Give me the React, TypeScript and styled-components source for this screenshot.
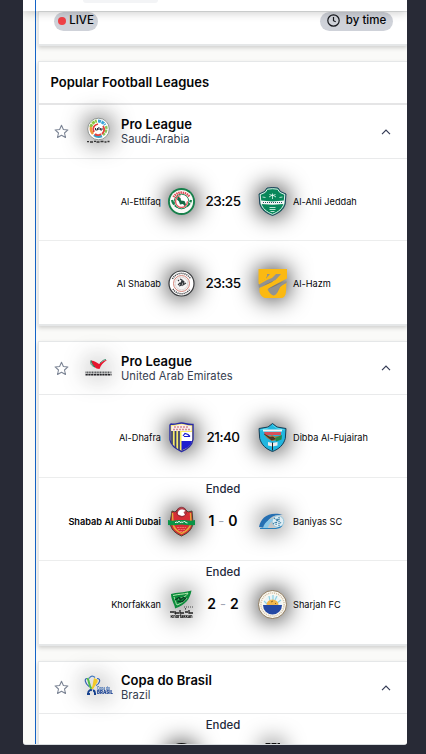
import React from "react";
import styled, { createGlobalStyle } from "styled-components";

const Global = createGlobalStyle`
  *, *::before, *::after { box-sizing: border-box; }
  body { margin: 0; background: #282a36; font-family: Inter, sans-serif; color: #050608; overflow: hidden; }
  svg { display: block; overflow: visible; }
`;
const Page = styled.div`
  height: 754px; padding: 0 19px 9px 23px; overflow: hidden; background: #282a36;
`;
const Phone = styled.main`
  height: 745px; overflow: hidden; background: #fafaf8;
  border-radius: 0 0 3px 3px; display: flex; flex-direction: column;
  border-bottom: 1px solid #d9dde0;
`;
const TopBar = styled.header`
  height: 11px; flex: none; background: #fff; padding-left: 12px; z-index: 2; position: relative;
  box-shadow: 0 2px 10px rgba(0, 0, 0, 0.2);
`;
const TopRail = styled.div`border-left: 1px solid #1464c8; height: 11px; padding-left: 47px;`;
const SearchEdge = styled.div`
  width: 75px; height: 3px; background: #f3f4f6; border-radius: 0 0 6px 6px;
`;
const Feed = styled.div`
  margin-left: 12px; border-left: 1px solid #1464c8; padding-left: 2px;
  flex: 1; min-height: 0; display: flex; flex-direction: column; gap: 15px;
`;
const Card = styled.section<{ $h: number }>`
  height: ${(p) => p.$h}px; flex: none; background: #fff;
  border: solid #e5e7e8; border-width: 1px 0 2px 1px;
  box-shadow: 0 2px 4px rgba(0, 0, 0, 0.17);
`;
const FilterBar = styled.div`
  display: flex; justify-content: space-between; padding: 0 14px 0 15px;
`;
const Pill = styled.button<{ $w: number; $gap: number }>`
  width: ${(p) => p.$w}px; height: 19px; border: 0; padding: 0 0 2px; border-radius: 10px;
  background: #cfd2d9; font: 500 11.5px/17px Inter, sans-serif; color: #050608;
  display: flex; align-items: center; justify-content: center; gap: ${(p) => p.$gap}px;
`;
const LiveDot = styled.i`width: 8px; height: 8px; border-radius: 50%; background: #ef4146;`;
const SectionTitle = styled.h1`
  margin: 0; height: 43px; padding-left: 11.5px; border-bottom: 2px solid #e5e5e6;
  font-size: 13px; line-height: 41px; font-weight: 600;
`;
const LeagueHead = styled.div<{ $h: number }>`
  height: ${(p) => p.$h}px; display: flex; align-items: center; padding: 0 16px 0 15px;
  border-bottom: 1px solid #e9eaeb;
`;
const LeagueLogo = styled.div`
  width: 29px; height: 29px; margin: 0 8px 0 15px;
  svg { filter: drop-shadow(0 0 12px rgba(0, 0, 0, 0.85)); }
`;
const LeagueText = styled.div<{ $lead: number }>`flex: 1; padding-top: ${(p) => p.$lead}px;`;
const LeagueName = styled.div`font-size: 13px; line-height: 15px; font-weight: 600;`;
const Country = styled.div`font-size: 11.2px; line-height: 14px; color: #374151;`;
const Match = styled.div<{ $h: number }>`
  height: ${(p) => p.$h}px; border-bottom: 1px solid #eceded;
  &:last-child { border-bottom: 0; }
`;
const Status = styled.div<{ $h: number }>`
  height: ${(p) => p.$h}px; text-align: center; font-size: 11.4px; line-height: 22px; font-weight: 500; color: #1e293b;
`;
const Teams = styled.div`
  height: 46px; display: grid; align-items: center;
  grid-template-columns: 122px 41px 42px 49px 1fr;
`;
const Team = styled.span<{ $home?: boolean; $winner?: boolean }>`
  font-size: 9.2px; white-space: nowrap; text-align: ${(p) => (p.$home ? "right" : "left")};
  font-weight: ${(p) => (p.$winner ? 600 : 400)};
`;
const Crest = styled.div<{ $away?: boolean }>`
  width: 29px; height: 29px; margin-left: ${(p) => (p.$away ? 14 : 6)}px;
  svg { filter: drop-shadow(0 0 12px #000); }
`;
const Score = styled.div`
  display: flex; justify-content: center; gap: 4px; white-space: nowrap;
  font-size: 14px; font-weight: 600; line-height: 18px;
`;
const Kickoff = styled(Score)`font-weight: 500; font-size: 13.5px; letter-spacing: -0.5px;`;
const Dash = styled.span`color: #a1a6b4; font-weight: 400; font-size: 13px;`;

const Svg = ({ children }: { children: React.ReactNode }) => (
  <svg width="29" height="29" viewBox="0 0 29 29" fill="none">{children}</svg>
);

const logos: Record<string, React.ReactNode> = {
  saudi: <Svg>
    <circle cx="14.5" cy="12" r="10.8" fill="#fff" stroke="#868b88" strokeWidth=".9" />
    <path d="M6.8 10a8 8 0 0 1 6-6" stroke="#8cc63e" strokeWidth="3" strokeDasharray="3 .6" />
    <path d="M14 4a8 8 0 0 1 7 4" stroke="#3ba5d7" strokeWidth="3" strokeDasharray="3 .6" />
    <path d="M22 9a8 8 0 0 1-3 9" stroke="#8cc65a" strokeWidth="2.5" strokeDasharray="3 .7" />
    <path d="M18 19a8 8 0 0 1-8-1" stroke="#3b9fc4" strokeWidth="2.5" />
    <path d="M9 17a8 8 0 0 1-2-7" stroke="#f1953c" strokeWidth="2.5" />
    <path d="M10 15c-2-4 0-7 4-8m5 2c2 3 1 6-1 8m-1 0c-2 2-5 1-6 0" stroke="#e6403a" strokeWidth="1.8" />
    <circle cx="14.5" cy="12" r="3.8" fill="#fff" />
    <path d="M11.5 11v2h2v-2m1.4 2v-3m1.5 1v2h1.6v-2" stroke="#26303a" strokeWidth="1" />
    <path d="M3 24.600h2m1 .4h3m1-.6h2m.5.6h3m1-.5h3m1 .5h2m1-.5h2" stroke="#333" strokeWidth="1.3" />
  </Svg>,
  ettifaq: <Svg>
    <circle cx="14.5" cy="14.5" r="13.5" fill="#16804b" />
    <circle cx="14.5" cy="14.5" r="11.6" fill="#f9faf7" />
    <path d="M6.5 10a9.5 9.5 0 0 1 16 0" stroke="#e14450" strokeWidth="2.5" strokeDasharray="1.4 .7" />
    <path d="M5 13a9.7 9.7 0 0 0 19 0" stroke="#16804b" strokeWidth="2.3" strokeDasharray="5 1" />
    <circle cx="14.5" cy="14.5" r="7.3" fill="#fff" stroke="#16804b" strokeWidth=".9" />
    <circle cx="14.5" cy="14.5" r="5.9" stroke="#e45058" strokeWidth="1.3" strokeDasharray="26 10" />
    <path d="m11 9.500 2.500 1.500.5 2.500 3.500.5 1.500 3.500-1.500 1.500-1.500-2-3 .5-1-3-2-2Z" fill="#126944" />
  </Svg>,
  ahli: <Svg>
    <path d="M9 1 14.5.5 20 1l2.5 3.5 5.5 2.5-.8 10C25.5 23 21 26 14.5 28.5 8 26 3.5 23 1.8 17L1 7l5.500-2.500Z" fill="#08875a" stroke="#173b59" strokeWidth=".9" />
    <path d="m9.400 2.200 5.100-.5 5.100.5 2.200 3.200 5 2.200-.8 9C24.600 21.500 20.500 25 14.500 27.300 8.500 25 4.400 21.500 3 16.600l-.8-9 5-2.200Z" stroke="#e5f3ef" strokeWidth="1" />
    <path d="m3 13.500 11.500 1L26 13.500v3.500l-11.500.8L3 17Z" fill="#f4f8f6" />
    <path d="M5 15.500h19" stroke="#284f5f" strokeWidth="1" strokeDasharray="1 1" />
    <path d="M14.500 6.500v5.500m-3-4.500 3 1 3-1m-3 .5-3.500 2m3.500-2 3.500 2M4.500 10l3 .5m14 0 3-.5M11.500 20.500h6m-6 2h6m-5 2h4" stroke="#e8faf2" strokeWidth=".8" />
  </Svg>,
  shabab: <Svg>
    <circle cx="14.5" cy="14.5" r="12.5" fill="#fff" stroke="#393b3e" strokeWidth="1.2" />
    <path d="M5.500 10a10 10 0 0 1 18 0M6 20a10 10 0 0 0 17 0" stroke="#4d4d4f" strokeWidth="1.500" strokeDasharray="1.200 .8" />
    <circle cx="14.5" cy="14.5" r="8" fill="#f7f5f5" stroke="#d0796d" strokeWidth=".9" />
    <circle cx="14.5" cy="14.5" r="6.3" stroke="#d5d2d2" strokeWidth=".8" />
    <path d="m11 16 2-2 1 2 2-4 1 1-1 3 3-2m-6-4 2 1-1 4m-3-3 1-1m0 6 3-1" stroke="#33373b" strokeWidth="1.1" />
  </Svg>,
  hazm: <Svg>
    <path d="M.5 0H29v9.500L14 17.500 7 21.500l2.500-4L20 7l2-2H9.500L8 10 .5 13.500Z" fill="#fbb912" />
    <path d="M9 5h14l-5.500 6L8 15l-7 4-.5-4L9 10.500Z" fill="#929292" />
    <path d="m12 5 6 0-4 4-5 2-8 4.500-.5-2L8 9.500Z" fill="#fbb912" />
    <path d="M1.500 19 14 13l-4 7c2 3 4 5 6 6.500 3-1 4-4 6-8.500l6.500-5-.5 10c-.5 4-2 6-5 6H8c-3 0-5.500-2.500-6.500-6Z" fill="#fbb912" />
    <path d="m28.500 12-9 4-10 4.500c2 3 3.500 5.500 6 6 3-1 5-6 7-9.500l6-3Z" fill="#929292" />
  </Svg>,
  uae: <Svg>
    <path d="M7 6.500c4 .5 6 2 8 3.500 3-2 5-4 8-4-4 2.500-6 5-7.500 9-4 0-7-3-8.500-8.500Z" fill="#e7152e" />
    <path d="M7 6.500c1 3.500 2 5 4 6.500-3-1-5-2.500-4-6.500Zm9 2.500c2-2 4-3.500 6-3.500" stroke="#1f7d5b" strokeWidth=".8" />
    <path d="M1.500 18.500h26" stroke="#55585a" strokeWidth="1.8" strokeDasharray="1.100 .5" />
    <path d="M1.500 20.700h26" stroke="#222226" strokeWidth="1.6" strokeDasharray="2.300 .5" />
  </Svg>,
  dhafra: <Svg>
    <path d="M4 1c4 1 7-1 10.500-1C18 0 21 2 26 1.500v15c-1 6-6 10-11.500 12C9 26 4 23 3 17V2Z" fill="#f8eb68" stroke="#292ba6" strokeWidth="1.400" />
    <path d="M5 8v13M8.500 8v17M12 8v19" stroke="#373c72" strokeWidth="1.700" />
    <path d="M14.500 9H25v9H14.500Z" fill="#fff" />
    <path d="M14.500 18H25c-1 5-5 7-10.500 9.500Z" fill="#2020cf" />
    <path d="M4.500 3c4 0 7-1.500 10-1.500S21 3 24.500 3v5H4.500Z" fill="#f9eeee" />
    <path d="M7 4h15M6 6.500h17" stroke="#d88d94" strokeWidth="1.300" strokeDasharray="2 1" />
    <path d="m16 13 2-2.500 3 1 2 2m-6 0h6" stroke="#1717d0" strokeWidth="1.200" />
  </Svg>,
  dibba: <Svg>
    <path d="M14.500.5 19 4l9 1.500-.7 10C25.500 22 21 26 14.500 28.500 8 26 3.500 22 1.700 15.500L1 5.500 10 4Z" fill="#22b6df" stroke="#153c55" strokeWidth="1" />
    <path d="m14.500 2 4 3 8 2M10.500 5 2.500 7" stroke="#60e3f4" strokeWidth=".8" />
    <path d="M6 9h17v3H7z" fill="#d64f5a" />
    <path d="M5 7.500h19" stroke="#f4f6f5" strokeWidth="2" />
    <path d="m6 11 6 2 2-1 3 1.500 6-1-4 4.500-5 1-5-3Z" fill="#ad763b" />
    <path d="m6 11 6 3.500 3-.5 2 2-4 1" fill="#4b3a2b" stroke="#25211f" strokeWidth=".6" />
    <path d="m17 15 7-3-.5 4.500-5.500 2Z" fill="#23864c" />
    <path d="m10 19 4.500 1 5-1v3.500l-5 1-4.500-1Z" fill="#eee" /><path d="M14.500 19.500v8" stroke="#222" strokeWidth="1" />
  </Svg>,
  ahliDubai: <Svg>
    <path d="m5 4 3 1 3-3h7l3 3 4-1 1 12c-1 7-5 10-11.500 13C7.500 26 4 22 3 16Z" fill="#d62d35" stroke="#4b4430" strokeWidth="1" />
    <path d="m5.500 6 .5 11c1 5 4 7 8.500 9.500C20 24 23 21 24 16l-.5-10" stroke="#e4a73a" strokeWidth="1.400" />
    <circle cx="14.500" cy="5" r="4.800" fill="#b83e49" stroke="#6b252b" strokeWidth=".6" />
    <path d="M11 7.500c-1-5 5-6.500 7.500-3.500l-2 1 1.500 3-3 1Z" fill="#fff" />
    <path d="M1 13c5 1.500 9 0 13.500 0 5 0 9 1.500 13.500 0v5c-5 1-9-.5-13.500-.5S6 19 1 18Z" fill="#0a9347" />
    <path d="m8 16 1-1 2 .5 1-1.500 1 1.500 2-.5 1 .5 1.500-1.500 1 1.500 2 .5" stroke="#fff" strokeWidth=".9" />
    <path d="M10 20.500h9m-8 2h7m-5 2h4" stroke="#ff897e" strokeWidth=".7" strokeDasharray="2 .6" />
  </Svg>,
  baniyas: <Svg>
    <path d="M1 20C3 11 10 4 26 8 16 7 9 11 7 21Z" fill="#256fb2" />
    <path d="M5 21c2-8 9-11 21-10-9 0-15 4-16 10Z" fill="#8bc9e8" />
    <circle cx="20" cy="14.500" r="5.800" fill="#dfedf4" stroke="#8ac1d9" strokeWidth=".8" />
    <path d="m16 11 3 2 3-3m-3 3-1 5m1-5 4 3m-8 1 3-2m3-5v9" stroke="#397fa5" strokeWidth="1.200" strokeDasharray="1.200 .8" />
    <path d="M2 21h16l7-2.500-3 2.500-4 1H2Z" fill="#2680bd" />
  </Svg>,
  khor: <Svg>
    <path d="M4 4c6-2 12-1 20.500-3.500C23 9 19 14.500 8 18.500 8 15 4 10 4 4Z" fill="#0c8c3c" />
    <path d="M6 5.500c6-1.500 10-1 15-2.500-2 4-6 5-10 6m-4-2c2 5 2 7 3 8 5-2 8-4 10-7" stroke="#b5e9b0" strokeWidth="1" />
    <path d="m8 10 4-2.500 1.500 2 3-2 2 1-3 3-5 0" stroke="#063a21" strokeWidth="1.300" />
    <path d="M17 17h9" stroke="#777" strokeWidth="1.300" strokeDasharray="1 1" />
    <path d="M3 22h4m1-1v2h4m1-3v3h4m1-1h3m1-2v3h4m-18 .8h1m9-5h1" stroke="#222" strokeWidth="1.300" />
    <text x="14.500" y="27.500" textAnchor="middle" fill="#111" fontSize="4" fontWeight="800" textLength="22">Khorfakkan</text>
  </Svg>,
  sharjah: <Svg>
    <circle cx="14.500" cy="14.500" r="14" fill="#faf8f0" stroke="#846f52" strokeWidth=".9" />
    <circle cx="14.500" cy="14.500" r="11.600" stroke="#d1bea3" strokeWidth="1.500" strokeDasharray="1 1" />
    <circle cx="14.500" cy="14.500" r="9.300" fill="#e9f4f8" />
    <path d="m6 11 3 3m2-8 1 5m3-6v5m4-4-2 4m6 0-4 3" stroke="#8ed1e1" strokeWidth="1.200" />
    <path d="M8.500 15a6 5.500 0 0 1 12 0" fill="#f2b64c" />
    <path d="M5 15h19a9.500 9.500 0 0 1-19 0Z" fill="#2549a4" />
    <path d="m13 12 2-1m2 2 1 1" stroke="#8f641f" strokeWidth="1" />
  </Svg>,
  copa: <Svg>
    <path d="M3 5.500c-3 0-2 5 2 8m8-8c5 0 2 6-1 7" stroke="#3262b4" strokeWidth="1.200" />
    <path d="M3.500 5c2 4 1.500 8 4 11" stroke="#54bb4a" strokeWidth="2" />
    <path d="M10 5c3 2 4 0 3.500 4L9 16H7.500C9 12 9 9 10 5Z" fill="#f2c928" />
    <path d="M5 5.500c2-3 4-3 6-1" stroke="#4479bd" strokeWidth="1.300" />
    <path d="M4 21c0-4 3-4.500 4-3.500M11 21c0-3-1-3.500-2-3.500M3 21h3m4 0h2" stroke="#16418f" strokeWidth="1.800" />
    <text x="13" y="16.500" fontSize="4.200" fontWeight="600" fill="#285caa" textLength="13" lengthAdjust="spacingAndGlyphs">Copa do</text>
    <text x="13" y="21" fontSize="5" fontWeight="900" fill="#173f91" textLength="16" lengthAdjust="spacingAndGlyphs">BRASIL</text>
  </Svg>,
  darkRound: <Svg>
    <circle cx="14.500" cy="14.500" r="13.500" fill="#f7f7f7" stroke="#111" strokeWidth="2" />
    <circle cx="14.500" cy="14.500" r="8" fill="#222" />
  </Svg>,
  darkTop: <Svg>
    <path d="M7 .5h15v9l-7 18-8-18Z" fill="#f7f7f7" />
    <path d="M7.500 1h5m1 0h5m1 0h2.500M9 8h11" stroke="#111" strokeWidth="2" />
  </Svg>,
};

const StarIcon = () => (
  <svg width="15" height="15" viewBox="0 0 24 24" fill="none" stroke="#7c8595" strokeWidth="1.700" strokeLinejoin="round">
    <path d="m12 2 3 6.800 7.300.7-5.500 4.900 1.600 7.200L12 17.900l-6.400 3.700 1.600-7.200L1.700 9.500 9 8.800Z" />
  </svg>
);
const Chevron = () => (
  <svg width="10" height="6" viewBox="0 0 10 6" fill="none" stroke="#343b55" strokeWidth="1.200"><path d="m1 5.200 4-4 4 4" /></svg>
);
const ClockIcon = () => (
  <svg width="13" height="13" viewBox="0 0 13 13" fill="none" stroke="#15171c" strokeWidth="1.200"><circle cx="6.500" cy="6.500" r="5.700" /><path d="M6.500 3v3.700l2.200 1.100" /></svg>
);

type Game = { home: string; away: string; crests: [string, string]; time?: string; score?: [string, string]; ended?: boolean; winner?: boolean; h: number };
type LeagueData = { name: string; country: string; logo: string; headH: number; lead: number; games: Game[] };

const saudi: LeagueData = { name: "Pro League", country: "Saudi-Arabia", logo: "saudi", headH: 54, lead: 0, games: [
  { home: "Al-Ettifaq", away: "Al-Ahli Jeddah", crests: ["ettifaq", "ahli"], time: "23:25", h: 82 },
  { home: "Al Shabab", away: "Al-Hazm", crests: ["shabab", "hazm"], time: "23:35", h: 83 },
] };
const emirates: LeagueData = { name: "Pro League", country: "United Arab Emirates", logo: "uae", headH: 53, lead: 1, games: [
  { home: "Al-Dhafra", away: "Dibba Al-Fujairah", crests: ["dhafra", "dibba"], time: "21:40", h: 83 },
  { home: "Shabab Al Ahli Dubai", away: "Baniyas SC", crests: ["ahliDubai", "baniyas"], score: ["1", "0"], ended: true, winner: true, h: 83 },
  { home: "Khorfakkan", away: "Sharjah FC", crests: ["khor", "sharjah"], score: ["2", "2"], ended: true, h: 83 },
] };
const brazil: LeagueData = { name: "Copa do Brasil", country: "Brazil", logo: "copa", headH: 52, lead: 0, games: [
  { home: "", away: "", crests: ["darkRound", "darkTop"], time: "", ended: true, h: 83 },
] };

const League = ({ data }: { data: LeagueData }) => (
  <>
    <LeagueHead $h={data.headH}>
      <StarIcon />
      <LeagueLogo>{logos[data.logo]}</LeagueLogo>
      <LeagueText $lead={data.lead}><LeagueName>{data.name}</LeagueName><Country>{data.country}</Country></LeagueText>
      <Chevron />
    </LeagueHead>
    {data.games.map((g) => (
      <Match key={g.crests[0]} $h={g.h}>
        <Status $h={g.ended ? 20 : 19}>{g.ended ? "Ended" : ""}</Status>
        <Teams>
          <Team $home $winner={g.winner}>{g.home}</Team>
          <Crest>{logos[g.crests[0]]}</Crest>
          {g.score ? <Score><span>{g.score[0]}</span><Dash>-</Dash><span>{g.score[1]}</span></Score> : <Kickoff>{g.time}</Kickoff>}
          <Crest $away>{logos[g.crests[1]]}</Crest>
          <Team>{g.away}</Team>
        </Teams>
      </Match>
    ))}
  </>
);

export default function App() {
  return (
    <>
      <Global />
      <Page>
        <Phone>
          <TopBar><TopRail><SearchEdge /></TopRail></TopBar>
          <Feed>
            <Card $h={35}>
              <FilterBar>
                <Pill $w={44} $gap={3}><LiveDot />LIVE</Pill>
                <Pill $w={73} $gap={6}><ClockIcon />by time</Pill>
              </FilterBar>
            </Card>
            <Card $h={265}><SectionTitle>Popular Football Leagues</SectionTitle><League data={saudi} /></Card>
            <Card $h={305}><League data={emirates} /></Card>
            <Card $h={160}><League data={brazil} /></Card>
          </Feed>
        </Phone>
      </Page>
    </>
  );
}
